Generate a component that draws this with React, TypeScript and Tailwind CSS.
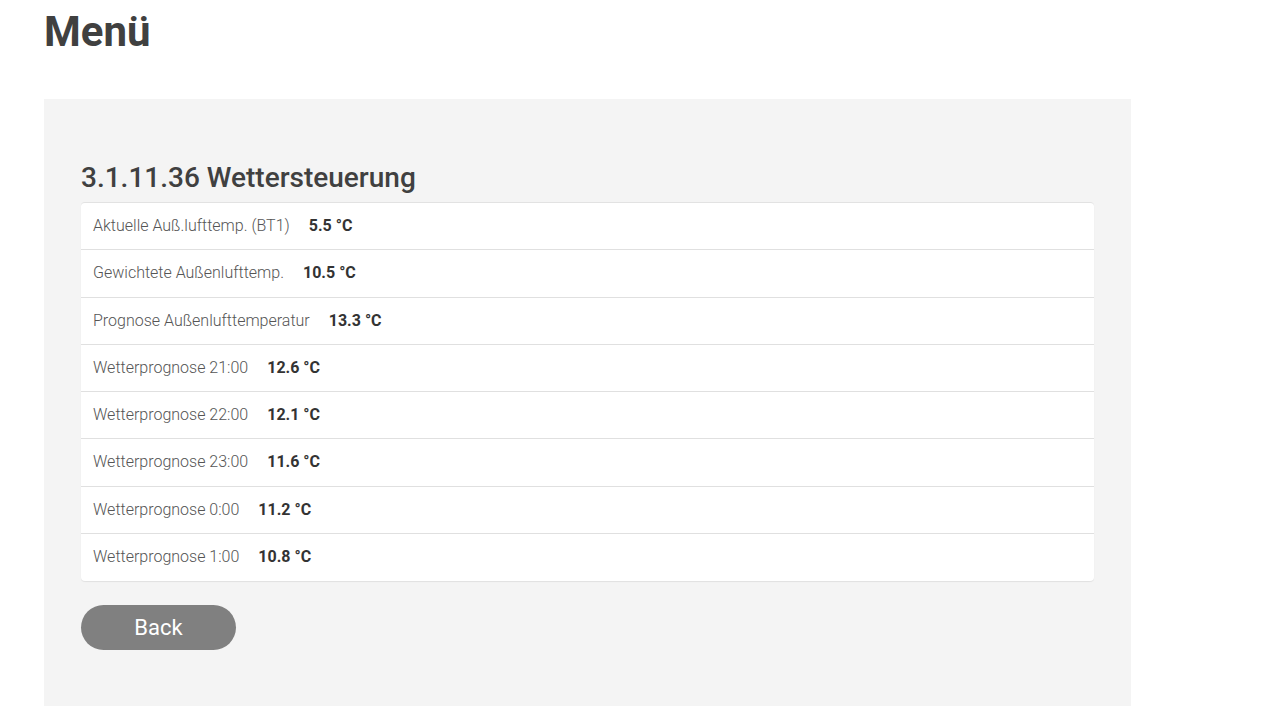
const rows: [string, string][] = [
  ["Aktuelle Auß.lufttemp. (BT1)", "5.5 °C"],
  ["Gewichtete Außenlufttemp.", "10.5 °C"],
  ["Prognose Außenlufttemperatur", "13.3 °C"],
  ["Wetterprognose 21:00", "12.6 °C"],
  ["Wetterprognose 22:00", "12.1 °C"],
  ["Wetterprognose 23:00", "11.6 °C"],
  ["Wetterprognose 0:00", "11.2 °C"],
  ["Wetterprognose 1:00", "10.8 °C"],
];

export default function App() {
  return (
    <main className="min-h-[728px] bg-white pl-[44px] font-['Roboto',sans-serif]">
      <h1 className="pt-[8px] text-[42px] leading-[48px] font-bold text-[#404040]">Menü</h1>

      <section className="mt-[43px] w-[1087px] bg-[#f4f4f4] px-[37px] pt-[54px] pb-[56px]">
        <h2 className="text-[28px] leading-[49px] font-medium text-[#404040]">3.1.11.36 Wettersteuerung</h2>

        <div className="rounded-[4px] border-t border-[#e2e2e2] bg-white shadow-[0_1px_1px_rgba(0,0,0,0.08)]">
          {rows.map(([label, value], i) => (
            <div
              key={label}
              className={`flex h-[47.25px] items-center gap-[19px] px-[12px] text-[16px] ${
                i < rows.length - 1 ? "border-b border-[#e0e0e0]" : ""
              }`}
            >
              <span className="font-light text-[#555]">{label}</span>
              <span className="font-bold text-[#333]">{value}</span>
            </div>
          ))}
        </div>

        <button className="mt-[24px] h-[45px] w-[155px] rounded-full bg-[#808080] text-[22px] text-white">
          Back
        </button>
      </section>
    </main>
  );
}
